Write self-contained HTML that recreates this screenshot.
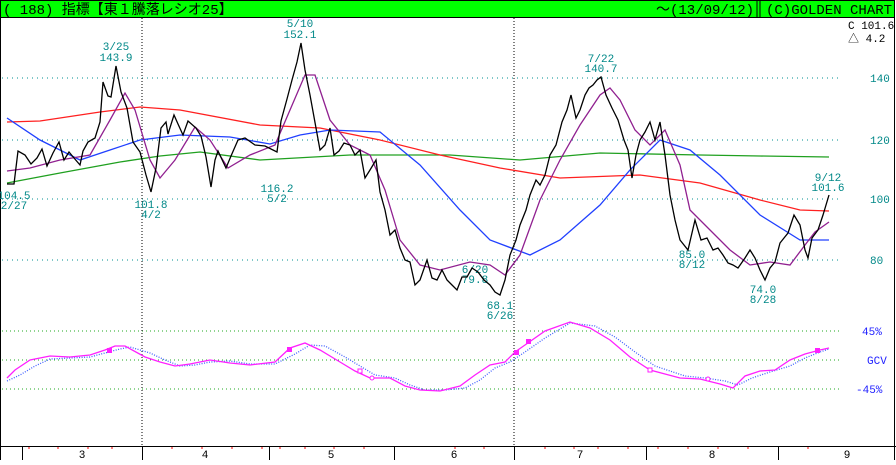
<!DOCTYPE html>
<html><head><meta charset="utf-8"><style>
body{margin:0;width:896px;height:460px;overflow:hidden;background:#fff;font-family:"Liberation Sans","Noto Sans CJK JP",sans-serif}
svg text{font-family:"Liberation Mono","Noto Sans CJK JP",monospace}
</style></head><body>
<svg width="896" height="460" xmlns="http://www.w3.org/2000/svg">
<rect x="0" y="0" width="896" height="460" fill="#fff"/>
<rect x="0.5" y="0.5" width="894" height="17" fill="#00ff00" stroke="#000"/>
<line x1="757" y1="1" x2="757" y2="17" stroke="#000"/><line x1="760" y1="1" x2="760" y2="17" stroke="#000"/>
<text x="3" y="14" font-size="14" font-family="Liberation Sans,Noto Sans CJK JP,sans-serif">( 188)  指標【東１騰落レシオ25】</text>
<text x="656" y="14" font-size="14" font-family="Liberation Sans,sans-serif">〜(13/09/12)</text>
<text x="766" y="14" font-size="14" font-family="Liberation Sans,sans-serif">(C)GOLDEN CHART</text>
<line x1="0.5" y1="18" x2="0.5" y2="460" stroke="#000"/>
<line x1="894.5" y1="18" x2="894.5" y2="460" stroke="#000"/>
<g stroke="#009090" stroke-dasharray="1 4"><line x1="2" y1="78" x2="840" y2="78"/><line x1="2" y1="140" x2="840" y2="140"/><line x1="2" y1="199" x2="840" y2="199"/><line x1="2" y1="260" x2="840" y2="260"/></g>
<g stroke="#22aa22" stroke-dasharray="1 3"><line x1="2" y1="331" x2="840" y2="331"/><line x1="2" y1="360" x2="840" y2="360"/><line x1="2" y1="389" x2="840" y2="389"/></g>
<g stroke="#000" stroke-dasharray="1 2"><line x1="142" y1="18" x2="142" y2="446"/><line x1="514" y1="18" x2="514" y2="446"/></g>
<g font-size="11" fill="#008888">
<text x="870" y="82">140</text><text x="870" y="144">120</text><text x="870" y="203">100</text><text x="870" y="264">80</text>
</g>
<g font-size="11" fill="#000"><text x="848" y="29">C 101.6</text><text x="848" y="42">△  4.2</text></g>
<g font-size="11" fill="#2222ff"><text x="862" y="335">45%</text><text x="867" y="364">GCV</text><text x="856" y="393">-45%</text></g>
<g font-size="11" fill="#008888" text-anchor="middle">
<text x="116" y="50">3/25</text><text x="116" y="61">143.9</text>
<text x="300" y="27">5/10</text><text x="300" y="38">152.1</text>
<text x="151" y="208">101.8</text><text x="151" y="218">4/2</text>
<text x="14" y="199">104.5</text><text x="14" y="209">2/27</text>
<text x="277" y="192">116.2</text><text x="277" y="202">5/2</text>
<text x="475" y="273">6/20</text><text x="475" y="283">79.8</text>
<text x="500" y="309">68.1</text><text x="500" y="319">6/26</text>
<text x="601" y="62">7/22</text><text x="601" y="72">140.7</text>
<text x="692" y="258">85.0</text><text x="692" y="268">8/12</text>
<text x="763" y="293">74.0</text><text x="763" y="303">8/28</text>
<text x="828" y="181">9/12</text><text x="828" y="191">101.6</text>
</g>
<g fill="none" stroke-width="1.3">
<polyline stroke="#20a020" points="7,183 60,173 120,162 160,156 200,152 260,160 350,155 450,155 520,160 600,153 700,155 760,156 829,157"/>
<polyline stroke="#ff2020" points="7,122 40,121 100,112 140,107 180,110 260,125 320,128 380,140 440,155 500,168 560,178 640,175 700,183 760,200 800,210 829,211"/>
<polyline stroke="#2040ff" points="7,118 40,140 80,160 110,150 140,140 180,135 230,137 270,144 300,135 330,130 380,132 420,165 460,210 490,240 530,255 560,240 600,205 630,170 660,140 690,150 720,175 760,215 800,240 829,240"/>
<polyline stroke="#902090" points="7,171 30,168 60,160 90,155 110,120 125,93 135,110 150,160 160,178 175,160 195,127 210,140 228,168 250,155 275,145 290,110 305,75 315,75 330,120 350,145 370,155 385,190 400,240 420,265 440,270 470,262 490,265 505,275 520,255 540,200 560,160 580,125 600,95 610,88 620,100 635,130 650,145 665,130 680,165 690,210 710,230 730,250 750,265 770,262 790,265 805,245 815,232 829,222"/>
<polyline stroke="#000" points="7,184 14,184 18,151 25,155 31,164 37,158 42,149 47,166 53,153 59,142 64,160 69,152 74,158 80,165 83,151 88,142 95,138 100,122 103,82 108,96 111,97 116,66 121,92 127,108 133,142 140,152 146,175 151,192 156,168 161,128 166,122 168,134 174,115 178,124 183,135 188,121 196,128 201,136 206,157 211,187 215,160 218,151 226,168 231,156 238,140 245,138 255,145 265,146 277,152 281,121 287,99 292,80 297,62 301,43 305,70 310,95 316,128 320,150 325,145 330,128 334,155 339,151 344,143 350,145 355,155 360,150 365,178 370,170 376,160 380,192 385,210 390,235 395,230 400,248 405,260 410,262 415,285 420,280 427,260 432,278 437,280 442,270 447,280 452,285 457,290 462,277 467,277 472,268 478,272 484,280 490,285 495,292 500,295 505,280 510,255 516,240 520,225 526,210 530,195 536,180 540,185 545,175 550,155 556,145 562,122 567,110 571,95 576,118 580,110 585,95 589,88 593,85 597,80 601,77 606,95 612,108 618,120 624,140 628,150 632,178 636,155 640,140 645,132 650,122 655,140 660,122 665,155 670,195 675,220 680,240 688,250 695,220 701,240 707,238 713,250 718,248 723,255 728,263 733,265 738,268 745,258 750,250 755,258 760,270 765,280 770,268 775,262 780,243 784,238 788,233 794,215 800,225 805,250 808,258 812,238 818,230 823,215 829,195"/>
<polyline stroke="#4060ff" stroke-dasharray="1 1.5" points="7,381 20,375 35,366 50,359 70,358 90,357 105,353 120,349 130,347 150,353 165,360 180,366 195,365 210,362 230,361 250,364 275,364 295,354 310,345 325,346 345,357 360,366 375,375 395,378 410,385 425,390 445,390 465,388 480,380 495,368 510,362 525,352 545,338 570,323 595,326 615,337 635,352 655,366 685,376 705,378 725,381 738,385 752,378 770,372 790,366 805,358 820,352 829,349"/>
<polyline stroke="#ff20ff" points="7,378 15,370 30,360 50,356 70,357 90,355 105,350 115,346 125,346 145,357 160,362 175,366 190,364 210,360 230,363 250,365 275,362 290,348 305,343 320,350 340,362 355,371 370,378 390,378 405,386 420,390 440,391 460,386 475,375 490,365 505,362 515,352 525,345 545,331 570,322 590,328 610,340 630,357 650,370 680,378 700,379 720,384 733,388 745,376 760,371 775,370 790,360 805,354 820,350 829,348"/>
</g>
<g fill="#ff20ff"><rect x="107" y="348" width="5" height="5"/><rect x="287" y="347" width="5" height="5"/><rect x="514" y="350" width="5" height="5"/><rect x="526" y="339" width="5" height="5"/><rect x="815" y="348" width="5" height="5"/></g>
<g fill="#fff" stroke="#ff20ff"><rect x="358" y="369" width="4" height="4"/><circle cx="372" cy="378" r="2"/><rect x="648" y="368" width="4" height="4"/><circle cx="708" cy="379" r="2"/></g>
<line x1="0" y1="446.5" x2="896" y2="446.5" stroke="#000"/>
<g stroke="#000"><line x1="22.5" y1="446" x2="22.5" y2="460"/><line x1="142.5" y1="446" x2="142.5" y2="460"/><line x1="269.5" y1="446" x2="269.5" y2="460"/><line x1="394.5" y1="446" x2="394.5" y2="460"/><line x1="514.5" y1="446" x2="514.5" y2="460"/><line x1="646.5" y1="446" x2="646.5" y2="460"/><line x1="778.5" y1="446" x2="778.5" y2="460"/></g>
<g stroke="#ff0000"><path d="M29 447v2M58 447v2M88 447v2M112 447v2M172 447v2M202 447v2M232 447v2M262 447v2M280 447v2M305 447v2M334 447v2M364 447v2M455 447v2M484 447v2M545 447v2M574 447v2M598 447v2M628 447v2M658 447v2M688 447v2M718 447v2M748 447v2M808 447v2"/></g>
<g font-size="11" fill="#000" text-anchor="middle"><text x="82" y="458">3</text><text x="205" y="458">4</text><text x="331" y="458">5</text><text x="454" y="458">6</text><text x="580" y="458">7</text><text x="712" y="458">8</text><text x="847" y="458">9</text></g>
</svg>
</body></html>
